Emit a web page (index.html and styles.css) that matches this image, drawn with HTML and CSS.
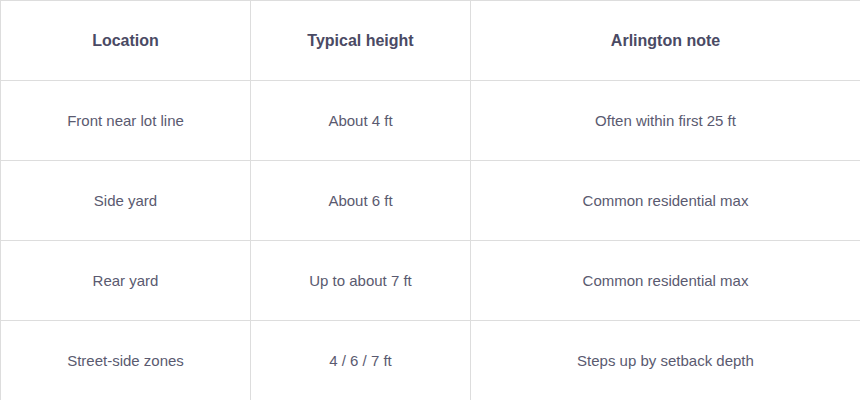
FILE: index.html
```html
<!DOCTYPE html>
<html>
<head>
<meta charset="utf-8">
<link rel="stylesheet" href="styles.css">
</head>
<body>
<table class="grid">
  <colgroup>
    <col class="c1">
    <col class="c2">
    <col class="c3">
  </colgroup>
  <thead>
    <tr><th>Location</th><th>Typical height</th><th>Arlington note</th></tr>
  </thead>
  <tbody>
    <tr><td>Front near lot line</td><td>About 4 ft</td><td>Often within first 25 ft</td></tr>
    <tr><td>Side yard</td><td>About 6 ft</td><td>Common residential max</td></tr>
    <tr><td>Rear yard</td><td>Up to about 7 ft</td><td>Common residential max</td></tr>
    <tr><td>Street-side zones</td><td>4 / 6 / 7 ft</td><td>Steps up by setback depth</td></tr>
  </tbody>
</table>
</body>
</html>
```
FILE: styles.css
```css
html, body {
  margin: 0;
  padding: 0;
  background: #ffffff;
}
.grid {
  width: 860px;
  border-collapse: collapse;
  table-layout: fixed;
  font-family: "Liberation Sans", Arial, sans-serif;
  font-size: 15px;
}
.c1 { width: 250px; }
.c2 { width: 220px; }
.c3 { width: 390px; }
.grid th, .grid td {
  height: 79px;
  padding: 0;
  border: 1px solid #dddddd;
  text-align: center;
  vertical-align: middle;
}
.grid th {
  font-size: 16px;
  font-weight: bold;
  color: #4a4a64;
}
.grid td {
  color: #5a5a70;
}
```
